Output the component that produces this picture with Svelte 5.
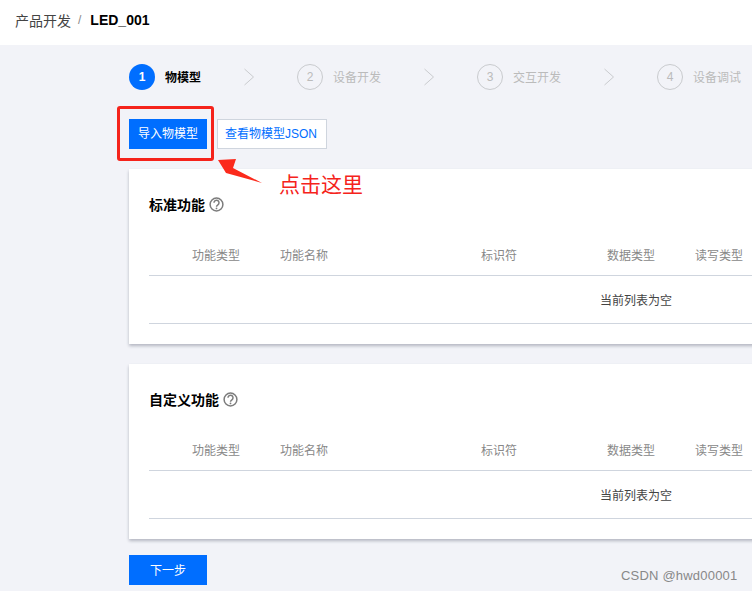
<script lang="ts">
  const steps = ['物模型', '设备开发', '交互开发', '设备调试'];
  const columns = ['功能类型', '功能名称', '标识符', '数据类型', '读写类型'];
  const sections = ['标准功能', '自定义功能'];
</script>

<div class="page">
  <header class="topbar">
    <span class="crumb">产品开发</span>
    <span class="sep">/</span>
    <span class="current">LED_001</span>
  </header>

  <main class="content">
    <div class="steps">
      {#each steps as step, i}
        <div class="step" class:active={i === 0}>
          <span class="num">{i + 1}</span>
          <span class="label">{step}</span>
        </div>
        {#if i < steps.length - 1}
          <svg class="chevron" width="10" height="18" viewBox="0 0 10 18">
            <path d="M.5 1l9 8-9 8" fill="none" stroke="#c9cbce" stroke-width="1" />
          </svg>
        {/if}
      {/each}
    </div>

    <div class="actions">
      <button class="btn primary">导入物模型</button>
      <button class="btn outline">查看物模型JSON</button>
    </div>

    {#each sections as section}
      <section class="card">
        <h2 class="title">
          {section}
          <svg class="help" width="15" height="15" viewBox="0 0 15 15">
            <circle cx="7.5" cy="7.5" r="6.4" fill="none" stroke="#7c7c7c" stroke-width="1.5" />
            <path d="M5 5.8a2.5 2.5 0 1 1 3.9 2c-.9.6-1.4 1-1.4 1.9" fill="none" stroke="#7c7c7c" stroke-width="1.5" />
            <circle cx="7.5" cy="11.4" r=".9" fill="#7c7c7c" />
          </svg>
        </h2>
        <div class="thead">
          {#each columns as col}
            <span>{col}</span>
          {/each}
        </div>
        <div class="empty">当前列表为空</div>
      </section>
    {/each}

    <button class="btn primary next">下一步</button>
  </main>

  <!-- annotation drawn over the screenshot -->
  <div class="callout"></div>
  <svg class="arrow" width="60" height="40" viewBox="0 0 60 40">
    <polygon points="0,11 18,10 15,19 44,34 8,24" fill="#fb2a1c" />
  </svg>
  <span class="callout-text">点击这里</span>
  <span class="watermark">CSDN @hwd00001</span>
</div>

<style>
  :global(body) {
    margin: 0;
    overflow: hidden;
  }

  .page {
    position: relative;
    width: 752px;
    height: 591px;
    overflow: hidden;
    background: #f2f3f8;
    font-family: "Liberation Sans", "Noto Sans CJK SC", sans-serif;
    font-size: 12px;
    color: #000;
  }

  .topbar {
    display: flex;
    align-items: center;
    height: 39px;
    padding: 0 15px 6px;
    background: #fff;
    font-size: 14px;
  }

  .crumb {
    color: #444;
  }

  .sep {
    margin: 0 9px 0 7px;
    color: #888;
    font-size: 12px;
  }

  .current {
    font-weight: 700;
  }

  .content {
    width: 1014px;
    padding: 19px 0 0 129px;
  }

  .steps {
    display: flex;
    align-items: center;
    height: 26px;
  }

  .step {
    display: flex;
    align-items: center;
    flex-shrink: 0;
    color: #bbb;
  }

  .chevron {
    flex-shrink: 0;
    margin: 0 43px;
  }

  .num {
    display: flex;
    align-items: center;
    justify-content: center;
    box-sizing: border-box;
    width: 26px;
    height: 26px;
    margin-right: 10px;
    border: 1px solid #c9cbce;
    border-radius: 50%;
  }

  .label {
    padding-bottom: 2px;
  }

  .step.active {
    color: #000;
  }

  .step.active .label {
    font-weight: 700;
  }

  .step.active .num {
    border: none;
    background: #006eff;
    color: #fff;
    font-weight: 700;
  }

  .actions {
    display: flex;
    gap: 10px;
    margin-top: 29px;
  }

  .btn {
    box-sizing: border-box;
    height: 30px;
    padding: 0 0 3px;
    border: none;
    border-radius: 0;
    font: inherit;
  }

  .primary {
    width: 78px;
    background: #006eff;
    color: #fff;
  }

  .outline {
    width: 110px;
    padding-right: 2px;
    background: #fff;
    border: 1px solid #cfd5de;
    color: #006eff;
  }

  .card {
    box-sizing: border-box;
    height: 175px;
    margin-top: 20px;
    padding: 27px 20px 0;
    background: #fff;
    box-shadow: 0 2px 3px 0 rgba(54, 58, 80, 0.32);
  }

  .title {
    display: flex;
    align-items: center;
    gap: 4px;
    height: 16px;
    margin: 0;
    font-size: 14px;
    font-weight: 700;
  }

  .thead {
    display: grid;
    grid-template-columns: 88px 201px 126px 88px 1fr;
    align-items: center;
    box-sizing: border-box;
    height: 64px;
    padding: 22px 0 0 43px;
    border-bottom: 1px solid #cfd5de;
    color: #888;
  }

  .empty {
    box-sizing: border-box;
    height: 48px;
    line-height: 51px;
    border-bottom: 1px solid #cfd5de;
    text-align: center;
    color: #444;
  }

  .next {
    display: block;
    margin-top: 16px;
    padding-bottom: 1px;
  }

  .callout {
    position: absolute;
    left: 117px;
    top: 106px;
    box-sizing: border-box;
    width: 97px;
    height: 55px;
    border: 3px solid #f5231b;
    border-radius: 3px;
  }

  .arrow {
    position: absolute;
    left: 218px;
    top: 149px;
  }

  .callout-text {
    position: absolute;
    left: 279px;
    top: 170px;
    font-size: 21px;
    line-height: 30px;
    color: #f5231b;
  }

  .watermark {
    position: absolute;
    left: 621px;
    top: 568px;
    font-size: 13px;
    line-height: 16px;
    letter-spacing: 0.2px;
    color: #888;
  }
</style>
